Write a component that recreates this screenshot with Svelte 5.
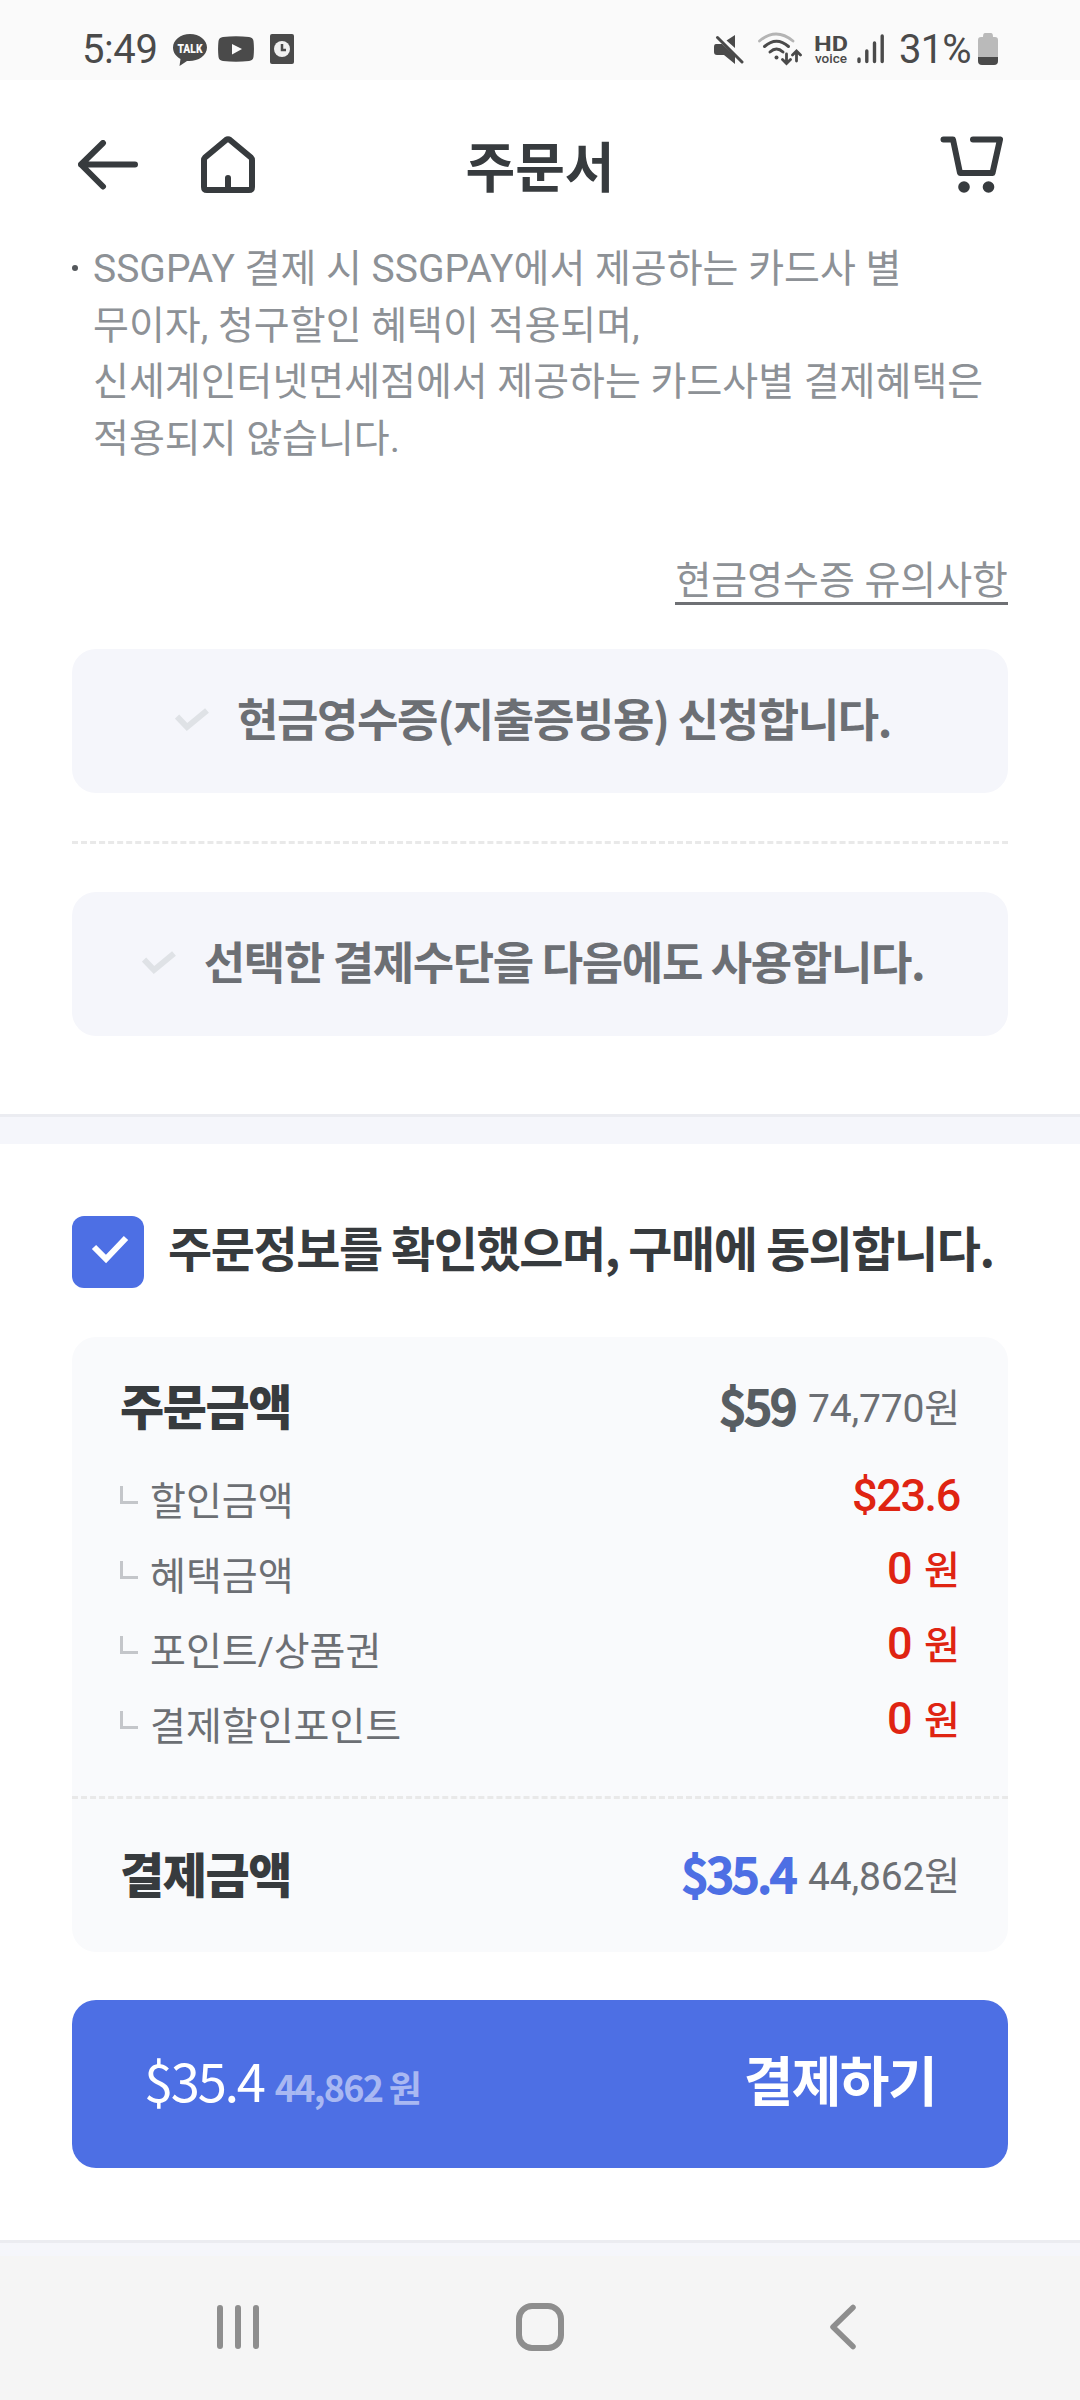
<script>
  // Rows shown under the order amount
  const discounts = [
    { label: '할인금액', value: '$23.6', unit: '' },
    { label: '혜택금액', value: '0', unit: '원' },
    { label: '포인트/상품권', value: '0', unit: '원' },
    { label: '결제할인포인트', value: '0', unit: '원' }
  ];

  let receipt = $state(false);
  let remember = $state(false);
  let agreed = $state(true);
</script>

<div class="screen">
  <div class="status">
    <div class="status-left">
      <span class="time">5:49</span>
      <svg class="talk" width="34" height="32" viewBox="0 0 34 32">
        <path d="M17 0C7.6 0 0 6 0 13.500C0 18.500 3 22.500 7.500 25L6.500 32L14 27C24 28 34 22 34 13.500C34 6 26.400 0 17 0Z" fill="#4a4a4a" />
        <text x="17" y="18.500" text-anchor="middle" textLength="25" lengthAdjust="spacingAndGlyphs">TALK</text>
      </svg>
      <svg class="tube" width="36" height="26" viewBox="0 0 36 26">
        <path d="M5 1Q18-.6 31 1Q35 1.500 35.500 5Q36.400 13 35.500 21Q35 24.500 31 25Q18 26.400 5 25Q1 24.500.5 21Q-.4 13 .5 5Q1 1.500 5 1Z" fill="#4a4a4a" />
        <path d="M14 8L24 13L14 18.500Z" fill="#fafafa" />
      </svg>
      <svg width="24" height="30" viewBox="0 0 24 30">
        <rect width="24" height="30" rx="2" fill="#4a4a4a" />
        <circle cx="12" cy="15" r="8" fill="#f0f0f0" />
        <path d="M12 10V16H16" fill="none" stroke="#4a4a4a" stroke-width="2.500" />
      </svg>
    </div>
    <div class="status-right">
      <svg class="mute" width="30" height="30" viewBox="0 0 30 30">
        <path d="M21 1V14L12.500 6.500ZM2 10H8L21 22V30L10 21H3Q0 21 0 18V13Q0 10 2 10Z" fill="#4a4a4a" />
        <path d="M3.500 3.500L28 28" stroke="#4a4a4a" stroke-width="3" stroke-linecap="round" />
      </svg>
      <svg class="wifi" width="44" height="34" viewBox="0 0 44 34" fill="none" stroke-linecap="round">
        <path d="M1.500 9Q18-5 35 9" stroke="#b4b4b4" stroke-width="2.800" />
        <path d="M6.500 14.500Q18.500 4 30.500 14.500M12 20Q18.500 14 25 20" stroke="#4a4a4a" stroke-width="3" />
        <circle cx="18.500" cy="25.500" r="2" fill="#4a4a4a" />
        <path d="M28.500 22V31M24.500 27.500L28.500 31.500L32.500 27.500M38.500 29V19.500M34.500 23L38.500 19L42.500 23" stroke="#4a4a4a" stroke-width="2.800" />
      </svg>
      <svg class="hd" width="33" height="30" viewBox="0 0 33 30">
        <text class="hd-top" x="-1" y="17" textLength="34" lengthAdjust="spacingAndGlyphs">HD</text>
        <text class="hd-sub" x="0" y="28.500" textLength="32" lengthAdjust="spacingAndGlyphs">voice</text>
      </svg>
      <svg class="signal" width="28" height="30" viewBox="0 0 28 30" stroke="#4a4a4a" stroke-width="3.400" stroke-linecap="round">
        <path d="M2 25V27.500M9.800 17V27.500M17.500 9V27.500M25.200 2V27.500" />
      </svg>
      <span class="percent">31%</span>
      <svg width="20" height="32" viewBox="0 0 20 32">
        <path d="M7 0H13Q15 0 15 4H17Q20 4 20 7V24H0V7Q0 4 3 4H5Q5 0 7 0Z" fill="#bababa" />
        <path d="M0 24H20V28Q20 32 16 32H4Q0 32 0 28Z" fill="#4a4a4a" />
      </svg>
    </div>
  </div>

  <header>
    <div class="header-left">
      <svg width="60" height="50" viewBox="0 0 60 50" fill="none" stroke="#373b3e" stroke-width="6" stroke-linecap="round" stroke-linejoin="round">
        <path d="M25 3L3 24.500L25 46.500M3 24.500H57" />
      </svg>
      <svg width="54" height="58" viewBox="0 0 54 58" fill="none" stroke="#373b3e" stroke-width="6" stroke-linecap="round" stroke-linejoin="round">
        <path d="M25 4Q27 2.500 29 4L50 21.500Q51 22.500 51 24V51Q51 54 48 54H6Q3 54 3 51V24Q3 22.500 4 21.500ZM27 42V53" />
      </svg>
    </div>
    <h1>주문서</h1>
    <svg width="64" height="58" viewBox="0 0 64 58" fill="none" stroke="#373b3e" stroke-width="6" stroke-linecap="round" stroke-linejoin="round">
      <path d="M3.500 3.500H13L20 37H52.500L60 3.500H33" />
      <circle cx="24" cy="51" r="5.800" fill="#373b3e" stroke="none" />
      <circle cx="48.500" cy="51" r="5.800" fill="#373b3e" stroke="none" />
    </svg>
  </header>

  <main>
    <section class="payment">
      <p class="notice">
        SSGPAY 결제 시 SSGPAY에서 제공하는 카드사 별<br />무이자, 청구할인 혜택이 적용되며,<br />신세계인터넷면세점에서 제공하는 카드사별 결제혜택은<br />적용되지 않습니다.
      </p>
      <a class="link" href="#receipt">현금영수증 유의사항</a>

      <button class="option" aria-pressed={receipt} onclick={() => (receipt = !receipt)}>
        <svg width="34" height="24" viewBox="0 0 34 24"><path d="M2 8.500L12 19L32 2.500" /></svg>
        <span>현금영수증(지출증빙용) 신청합니다.</span>
      </button>
      <svg class="dashes" width="936" height="3"><path d="M0 1.500H936" /></svg>
      <button class="option" aria-pressed={remember} onclick={() => (remember = !remember)}>
        <svg width="34" height="24" viewBox="0 0 34 24"><path d="M2 8.500L12 19L32 2.500" /></svg>
        <span>선택한 결제수단을 다음에도 사용합니다.</span>
      </button>
    </section>

    <div class="band"></div>

    <section class="summary">
      <button class="agree" aria-pressed={agreed} onclick={() => (agreed = !agreed)}>
        <span class="box" class:on={agreed}>
          <svg width="38" height="30" viewBox="0 0 38 30"><path d="M3 13L15 25L35 4" /></svg>
        </span>
        <span class="agree-text">주문정보를 확인했으며, 구매에 동의합니다.</span>
      </button>

      <div class="panel">
        <div class="row order">
          <strong>주문금액</strong>
          <span class="price"><b>$59</b><small>74,770원</small></span>
        </div>
        {#each discounts as item}
          <div class="row sub">
            <span class="label"><i></i>{item.label}</span>
            <span class="value" class:won={item.unit}>{item.value}{#if item.unit}<small>{item.unit}</small>{/if}</span>
          </div>
        {/each}
        <svg class="dashes" width="936" height="3"><path d="M0 1.500H936" /></svg>
        <div class="row total">
          <strong>결제금액</strong>
          <span class="price blue"><b>$35.4</b><small>44,862원</small></span>
        </div>
      </div>

      <button class="pay">
        <span class="pay-row">
          <span><span class="usd">$35.4</span><span class="krw">44,862 원</span></span>
          <span class="go">결제하기</span>
        </span>
      </button>
    </section>
    <div class="band last"></div>
  </main>

  <nav>
    <svg width="42" height="46" viewBox="0 0 42 46" stroke="#8e8e8e" stroke-width="6" stroke-linecap="round">
      <path d="M3 4V42M21 4V42M39 4V42" />
    </svg>
    <svg class="home-key" width="48" height="48" viewBox="0 0 48 48">
      <rect x="3" y="3" width="42" height="42" rx="13" fill="none" stroke="#8e8e8e" stroke-width="6" />
    </svg>
    <svg width="28" height="46" viewBox="0 0 28 46">
      <path d="M23 3.500L3 23L23 42.500" fill="none" stroke="#8e8e8e" stroke-width="5.500" stroke-linecap="round" stroke-linejoin="round" />
    </svg>
  </nav>
</div>

<style>
  :global(body) {
    margin: 0;
    background: #fff;
  }

  .screen {
    width: 1080px;
    height: 2400px;
    overflow: hidden;
    display: flex;
    flex-direction: column;
    font-family: Roboto, 'Noto Sans CJK KR', sans-serif;
    color: #373b3e;
  }

  svg {
    display: block;
    flex: none;
  }

  button {
    border: 0;
    margin: 0;
    padding: 0;
    background: none;
    font: inherit;
    color: inherit;
    letter-spacing: inherit;
  }

  /* Status bar */
  .status {
    height: 80px;
    box-sizing: border-box;
    padding: 20px 82px 0 82px;
    display: flex;
    justify-content: space-between;
    align-items: flex-start;
    background: #fafafa;
    color: #4a4a4a;
    font-size: 40px;
  }

  .status-left,
  .status-right {
    display: flex;
    align-items: center;
    height: 60px;
    margin-top: -1px;
  }

  .time {
    width: 91px;
    letter-spacing: -0.4px;
  }

  .talk {
    margin: 1px 11px 0 0;
  }

  .talk text {
    font-size: 12px;
    font-weight: 900;
    fill: #fafafa;
  }

  .tube {
    margin-right: 16px;
  }

  .mute {
    margin-right: 14px;
  }

  .wifi {
    margin-right: 13px;
  }

  .hd {
    margin-right: 9px;
    overflow: visible;
    fill: #4a4a4a;
  }

  .hd-top {
    font-size: 21px;
    font-weight: 700;
  }

  .hd-sub {
    font-size: 12px;
    font-weight: 500;
  }

  .signal {
    margin-right: 14px;
  }

  .percent {
    width: 79px;
    letter-spacing: -0.8px;
  }

  /* Title bar */
  header {
    height: 160px;
    box-sizing: border-box;
    padding: 56px 76px 0 78px;
    display: grid;
    grid-template-columns: 1fr auto 1fr;
    align-items: start;
  }

  header > svg {
    justify-self: end;
  }

  .header-left {
    display: flex;
    align-items: center;
    gap: 63px;
  }

  h1 {
    margin: 0;
    font: 700 54px/58px 'Noto Sans CJK KR', sans-serif;
    margin-left: -2px;
  }

  /* Payment options */
  .payment {
    padding: 0 72px 78px;
    display: flex;
    flex-direction: column;
  }

  .notice {
    position: relative;
    margin: 0;
    padding: 1px 0 0 21px;
    font-size: 39px;
    line-height: 56.67px;
    color: #8d9196;
    white-space: nowrap;
  }

  .notice::before {
    content: '';
    position: absolute;
    left: 0;
    top: 25px;
    width: 6px;
    height: 6px;
    border-radius: 50%;
    background: #54585c;
  }

  .link {
    align-self: flex-end;
    margin: 92px 0 44px;
    font-size: 39px;
    line-height: 42px;
    color: #8d9196;
    text-decoration: none;
    border-bottom: 3px solid #6e7074;
  }

  .option {
    height: 144px;
    display: flex;
    align-items: center;
    justify-content: center;
    gap: 28px;
    padding-right: 14px;
    border-radius: 24px;
    background: #f5f6fb;
    font: 700 45px/60px 'Noto Sans CJK KR', sans-serif;
    letter-spacing: -1.35px;
    color: #6c6f74;
    white-space: nowrap;
  }

  .option svg {
    margin-bottom: 2px;
  }

  .option span {
    padding-bottom: 6px;
  }

  .option path {
    fill: none;
    stroke: #dfe2e6;
    stroke-width: 6;
  }

  .payment .dashes {
    margin: 48px 0;
  }

  .dashes path {
    stroke: #e9e9e9;
    stroke-width: 3;
    stroke-dasharray: 6 3.03;
  }

  .band {
    height: 27px;
    border-top: 3px solid #ebecf1;
    background: #f5f6fb;
  }

  .band.last {
    height: 13px;
  }

  /* Order summary */
  .summary {
    padding: 72px 72px 72px;
  }

  .agree {
    display: flex;
    align-items: center;
    gap: 24px;
    height: 72px;
  }

  .box {
    width: 72px;
    height: 72px;
    border-radius: 12px;
    display: grid;
    place-items: center;
    background: #dfe2e6;
  }

  .box.on {
    background: #4d6fe4;
  }

  .box svg {
    margin: 0 0 5px 3px;
  }

  .box path {
    fill: none;
    stroke: #fff;
    stroke-width: 6;
  }

  .agree-text {
    padding-bottom: 12px;
    font: 700 48px/60px 'Noto Sans CJK KR', sans-serif;
    letter-spacing: -1.44px;
    white-space: nowrap;
  }

  .panel {
    margin-top: 49px;
    border-radius: 24px;
    background: #f9fafc;
  }

  .row {
    display: flex;
    justify-content: space-between;
    padding: 0 48px;
  }

  .order,
  .total {
    align-items: baseline;
    font: 700 48px/60px 'Noto Sans CJK KR', sans-serif;
    letter-spacing: -1.44px;
  }

  .order {
    height: 90px;
    padding-top: 37px;
  }

  /* regular cut thickened, narrower than the real bold */
  .price b {
    font-weight: 500;
    letter-spacing: -1.9px;
    color: #585e63;
    -webkit-text-stroke: 1.8px currentColor;
  }

  .price.blue b {
    color: #4d6fe4;
  }

  .price small {
    margin-left: 12.5px;
    vertical-align: 3px;
    font: 400 39px/40px Roboto, 'Noto Sans CJK KR', sans-serif;
    letter-spacing: -0.15px;
    color: #6c6f74;
  }

  .sub {
    height: 75px;
    align-items: center;
  }

  .label {
    display: flex;
    align-items: center;
    padding-top: 2px;
    font-size: 39px;
    line-height: 56px;
    color: #6c6f74;
  }

  .label i {
    width: 15px;
    height: 15px;
    margin: 0 12px 14px 0;
    border-left: 3px solid #c4c6ca;
    border-bottom: 3px solid #c4c6ca;
  }

  .value {
    padding-bottom: 10px;
    font-size: 45px;
    font-weight: 500;
    line-height: 56px;
    letter-spacing: -1.35px;
    color: #df2412;
  }

  .value.won {
    padding-bottom: 14px;
  }

  .value small {
    margin-left: 13px;
    font-size: 39px;
    line-height: 40px;
    letter-spacing: 0;
  }

  .panel .dashes {
    margin-top: 32px;
  }

  .total {
    height: 110px;
    padding-top: 43px;
  }

  .pay {
    width: 100%;
    height: 168px;
    margin-top: 48px;
    display: flex;
    align-items: center;
    border-radius: 24px;
    background: #4d6fe4;
    color: #fff;
  }

  .pay-row {
    flex: 1;
    display: flex;
    justify-content: space-between;
    align-items: baseline;
    padding: 0 72px 3px 72px;
    font: 400 54px/72px 'Noto Sans CJK KR', sans-serif;
  }

  .usd {
    font-size: 52.5px;
    letter-spacing: -2.3px;
  }

  .krw {
    margin-left: 11px;
    font-size: 36px;
    font-weight: 700;
    letter-spacing: -1.7px;
    color: #a9b8f2;
  }

  .go {
    font-weight: 700;
    letter-spacing: -1.62px;
  }

  /* Navigation bar */
  nav {
    flex: 1;
    padding: 0 222px 2px 217px;
    display: flex;
    justify-content: space-between;
    align-items: center;
    background: #f5f5f5;
  }

  .home-key {
    margin-right: 9px;
  }
</style>
